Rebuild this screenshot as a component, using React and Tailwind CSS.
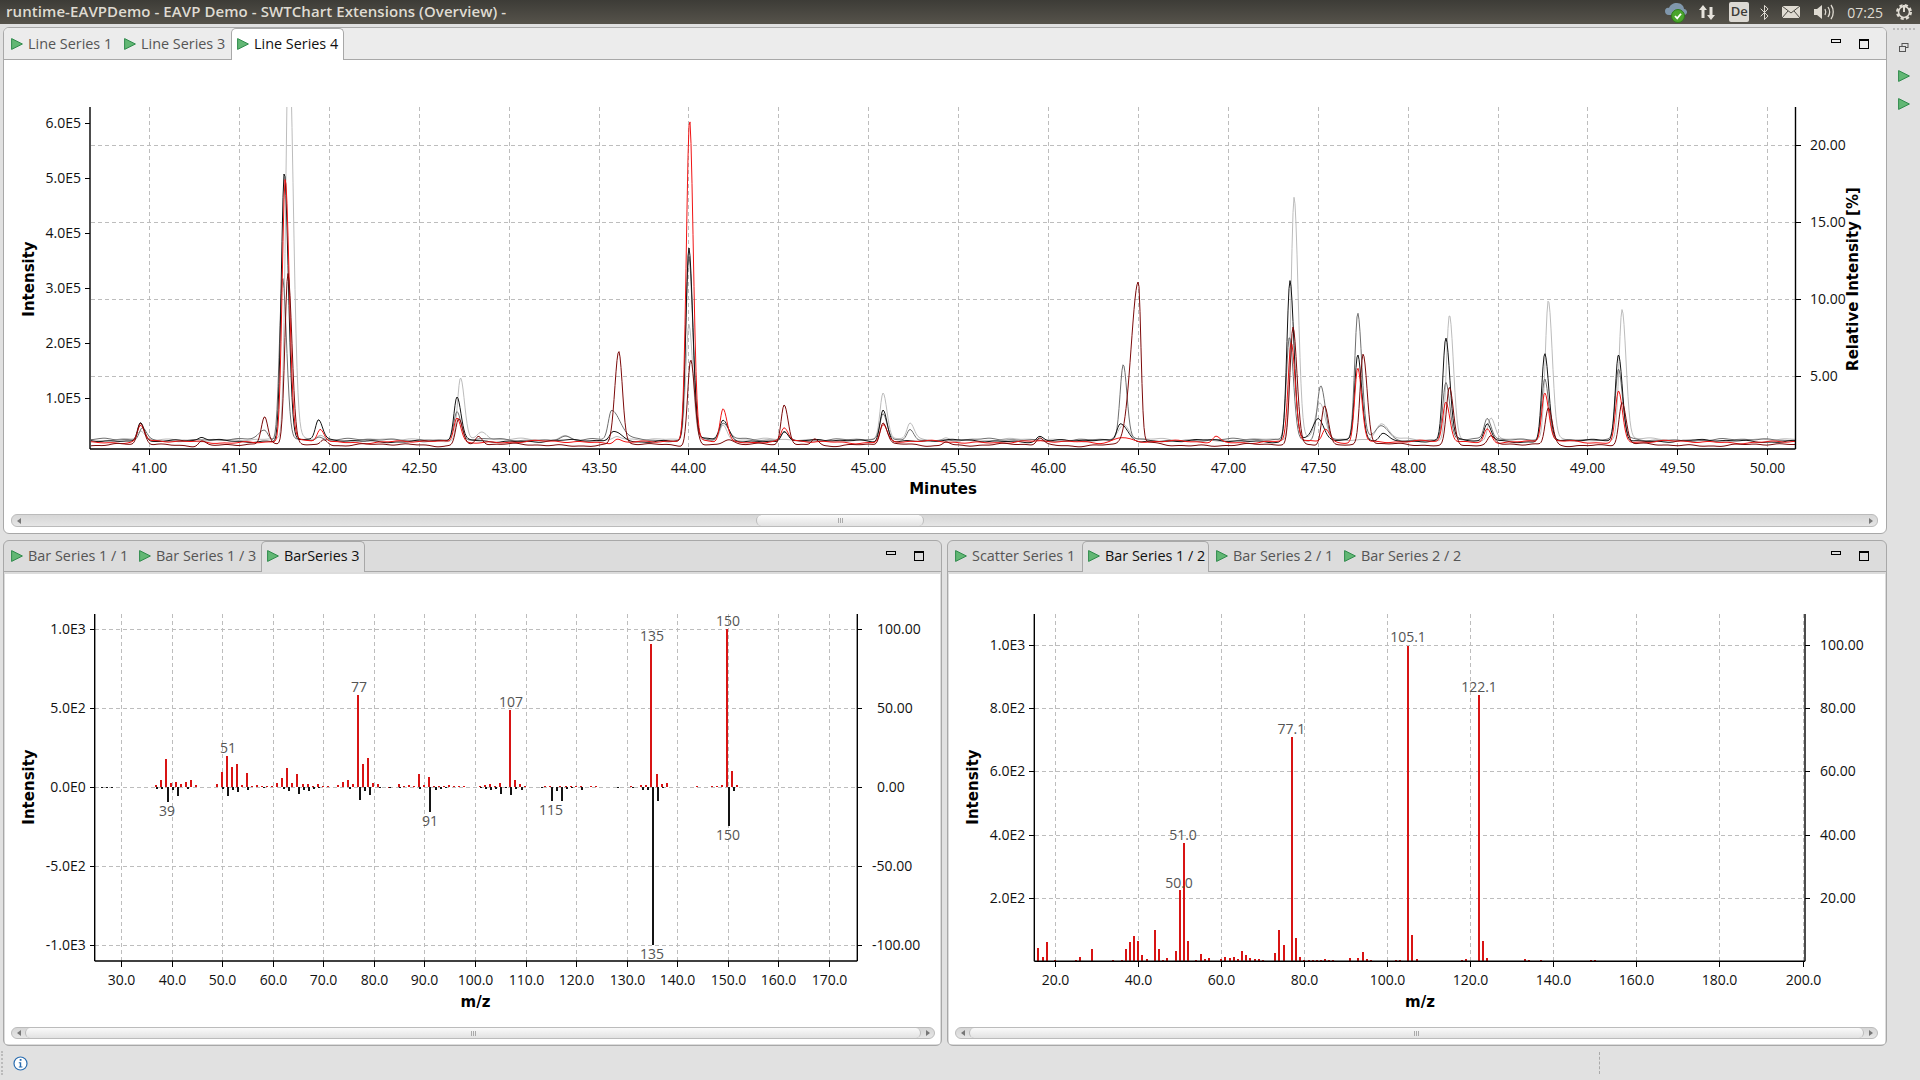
import React from "react";
import { Bluetooth } from "lucide-react";

const TICK_FONT = "font-['Open_Sans',sans-serif] text-[14px] fill-[#111]";
const TITLE_FONT = "font-['DejaVu_Sans',sans-serif] font-bold text-[15px] fill-black";
const LABEL_FONT = "font-['Open_Sans',sans-serif] text-[14px] fill-[#555]";
const GRID = "#bdbdbd";

// [m/z, height in thirds of a pixel] read off the reference
const LEFT_RED = [[37,7],[38,22],[39,85],[40,13],[41,16],[42,10],[43,15],[44,22],[45,7],[49,10],[50,46],[51,94],[52,61],[53,69],[54,7],[55,43],[56,4],[57,6],[58,3],[59,3],[60,4],[61,12],[62,28],[63,58],[64,12],[65,40],[66,9],[67,9],[68,3],[69,9],[70,4],[71,4],[73,7],[74,16],[75,22],[76,9],[77,277],[78,70],[79,88],[80,12],[81,9],[83,1],[85,9],[86,3],[87,6],[88,4],[89,40],[90,7],[91,30],[92,3],[93,3],[94,3],[95,6],[96,4],[97,4],[98,4],[101,3],[102,6],[103,9],[104,4],[105,12],[107,232],[108,22],[109,9],[110,4],[114,3],[115,3],[117,3],[118,3],[119,3],[120,3],[121,3],[123,3],[124,3],[131,3],[133,6],[134,6],[135,430],[136,40],[137,9],[138,12],[144,3],[147,3],[148,3],[149,6],[150,474],[151,49],[152,6]];
const LEFT_BLACK = [[26,3],[27,3],[28,3],[37,5],[38,6],[39,46],[40,10],[41,28],[43,7],[50,7],[51,28],[52,10],[53,16],[55,10],[58,4],[62,7],[63,13],[65,22],[66,10],[67,13],[68,7],[69,4],[75,6],[77,40],[78,13],[79,25],[81,4],[83,3],[85,3],[89,7],[91,76],[92,10],[93,7],[94,4],[101,3],[102,7],[103,10],[104,7],[105,22],[106,4],[107,25],[108,7],[109,10],[113,3],[115,43],[116,13],[117,43],[118,6],[119,3],[121,10],[128,4],[131,3],[133,10],[134,10],[135,474],[136,43],[137,4],[150,118],[151,12]];
const RIGHT_RED = [[16,40],[17,13],[18,58],[20,4],[25,4],[26,13],[29,37],[34,4],[36,4],[37,37],[38,58],[39,76],[40,61],[41,19],[42,7],[44,94],[45,37],[46,4],[47,10],[49,31],[50,212],[51,355],[52,61],[54,4],[55,22],[56,7],[57,10],[60,7],[61,13],[62,10],[63,13],[64,7],[65,31],[66,19],[67,10],[68,7],[69,7],[70,4],[73,25],[74,94],[75,49],[77,673],[78,70],[79,13],[80,4],[81,4],[82,4],[83,4],[84,4],[85,7],[86,4],[87,4],[91,10],[93,10],[94,28],[95,7],[96,4],[102,4],[103,4],[105,945],[106,79],[107,7],[118,4],[119,7],[122,799],[123,61],[124,10],[133,7],[134,4],[137,4],[149,4],[150,4]];

const LINE_SERIES = [
  {
    color: "#bcbcbc",
    base: 440,
    peaks: [[40.95,432],[41.775,30,0.017,0.024],[41.95,436],[42.73,377],[42.85,432,0.025,0.03],[43.31,436,0.03,0.03],[43.6,437],[44.0,323],[44.19,425],[45.08,393],[45.23,424],[45.43,437],[46.42,425,0.03,0.03],[47.366,198],[47.51,403,0.025,0.03],[47.85,424,0.03,0.04],[48.23,315],[48.46,418],[48.78,301],[49.19,309]],
  },
  {
    color: "#707070",
    base: 440,
    peaks: [[40.96,428],[41.64,430,0.03,0.02],[41.74,277],[41.94,436],[42.71,412],[43.31,435,0.03,0.03],[43.57,411,0.018,0.05],[44.0,256],[44.19,424,0.02,0.03],[44.53,432],[45.08,415],[45.23,428],[46.416,366,0.018,0.02],[47.34,336],[47.514,386,0.02,0.025],[47.72,313],[47.85,427,0.03,0.04],[48.21,381],[48.44,419],[48.76,378],[49.17,370]],
  },
  {
    color: "#141414",
    base: 441,
    peaks: [[40.95,421],[41.29,438],[41.75,172],[41.94,421],[42.71,398],[43.58,432,0.02,0.05],[44.0,248],[44.19,421,0.02,0.03],[44.53,430],[45.08,409],[45.95,436],[46.4,423,0.02,0.04],[47.343,280],[47.5,419,0.03,0.03],[47.72,355],[47.86,432,0.02,0.03],[48.21,339],[48.44,424],[48.76,354],[49.17,354]],
  },
  {
    color: "#f01414",
    base: 442,
    peaks: [[40.95,426],[41.755,180],[41.95,429],[42.71,417],[43.6,438],[44.004,121,0.018,0.02],[44.19,408],[44.53,429],[45.08,425],[46.4,437,0.04,0.05],[46.93,436],[47.35,343],[47.54,430],[47.72,367],[48.21,402],[48.44,428],[48.76,393],[49.17,391]],
  },
  {
    color: "#7c0a0a",
    base: 445,
    peaks: [[40.95,424],[41.29,440],[41.64,418,0.018,0.018],[41.77,273],[41.97,439],[42.72,418],[42.83,436],[43.61,352,0.022,0.02],[44.01,359],[44.22,439,0.03,0.03],[44.53,405],[44.7,438],[45.08,423],[45.43,441],[45.95,438],[46.5,283,0.04,0.014],[47.36,328],[47.535,404],[47.75,354],[48.23,387],[48.46,437],[48.78,408],[49.19,403]],
  },
];

const lineX = (t) => 329.3 + (t - 42) * 179.8;

const buildTrace = ({ base, peaks }, seed) => {
  const points = [];
  for (let x = 91; x <= 1795; x += 1) {
    const t = 42 + (x - 329.3) / 179.8;
    let y = base + 0.9 * Math.sin(t * 9 + seed) + 0.6 * Math.sin(t * 23 + seed * 2) + 0.4 * Math.sin(t * 51 + seed * 3);
    peaks.forEach(([pt, top, left = 0.017, right = 0.022]) => {
      const d = t - pt;
      const s = d < 0 ? left : right;
      const g = Math.exp((-d * d) / (2 * s * s));
      const tail = d > 0 ? Math.exp(-d / 0.05) : g;
      y -= (base - top) * (0.96 * g + 0.04 * tail);
    });
    points.push(`${x},${Math.min(y, 448).toFixed(1)}`);
  }
  return points.join(" ");
};

const Play = () => (
  <svg width="12" height="12" viewBox="0 0 12 12" className="shrink-0">
    <polygon points="0.6,0.6 11.4,6 0.6,11.4" fill="#62b774" stroke="#2f8a4c" />
  </svg>
);

const Tab = ({ label, active, width, dim }) => (
  <div
    className={
      active
        ? `flex items-center gap-[5px] pl-[5px] pb-[2px] -mb-px shrink-0 rounded-t-[5px] border border-b-0 border-[#a8a8a8] ${dim ? "bg-[#e0e0e0]" : "bg-white"} ${width}`
        : `flex items-center gap-[5px] pl-[7px] shrink-0 ${width}`
    }
  >
    <Play />
    <span className={`text-[14.4px] whitespace-nowrap ${active ? "text-[#111]" : "text-[#555]"}`}>{label}</span>
  </div>
);

const WindowButtons = ({ dim }) => (
  <div className={`ml-auto flex items-start gap-[18px] mr-[17px] ${dim ? "pt-[10px]" : "pt-[11px]"}`}>
    <div className="w-[10px] h-[4px] border border-black" />
    <div className="w-[10px] h-[10px] border border-black border-t-2" />
  </div>
);

const ScrollButton = ({ right }) => (
  <div className="w-[13px] flex items-center justify-center shrink-0">
    <div
      className={`w-0 h-0 border-y-[3px] border-y-transparent ${right ? "border-l-[4px] border-l-[#777]" : "border-r-[4px] border-r-[#777]"}`}
    />
  </div>
);

const Scrollbar = ({ className, thumb }) => (
  <div className={`flex rounded-[6px] border border-[#bbb] bg-gradient-to-b from-[#d6d6d6] to-[#e6e6e6] ${className}`}>
    <ScrollButton />
    <div className={`flex-1 flex min-w-0 ${thumb}`}>
      <div className="flex-1 flex items-center justify-center rounded-[6px] border-x border-[#bbb] bg-gradient-to-b from-[#fafafa] to-[#e2e2e2]">
        <div className="flex gap-[1px]">
          <div className="w-px h-[5px] bg-[#aaa]" />
          <div className="w-px h-[5px] bg-[#aaa]" />
          <div className="w-px h-[5px] bg-[#aaa]" />
        </div>
      </div>
    </div>
    <ScrollButton right />
  </div>
);

const HGrid = ({ ys, x1, x2 }) =>
  ys.map((y) => (
    <line key={y} x1={x1} x2={x2} y1={y + 0.5} y2={y + 0.5} stroke={GRID} strokeDasharray="4 3" shapeRendering="crispEdges" />
  ));

const VGrid = ({ xs, y1, y2 }) =>
  xs.map((x) => (
    <line key={x} x1={x + 0.5} x2={x + 0.5} y1={y1} y2={y2} stroke={GRID} strokeDasharray="4 3" shapeRendering="crispEdges" />
  ));

const Axes = ({ left, right, top, bottom }) => (
  <g stroke="#000" strokeWidth="1.4">
    <line x1={left} x2={left} y1={top} y2={bottom} />
    <line x1={right} x2={right} y1={top} y2={bottom} />
    <line x1={left} x2={right} y1={bottom} y2={bottom} />
  </g>
);

const LeftTicks = ({ items, axis }) =>
  items.map(([y, label]) => (
    <g key={label}>
      <line x1={axis - 5} x2={axis} y1={y + 0.5} y2={y + 0.5} stroke="#000" shapeRendering="crispEdges" />
      <text x={axis - 9} y={y + 5} textAnchor="end" className={TICK_FONT}>{label}</text>
    </g>
  ));

const RightTicks = ({ items, axis, textX }) =>
  items.map(([y, label]) => (
    <g key={label}>
      <line x1={axis} x2={axis + 5} y1={y + 0.5} y2={y + 0.5} stroke="#000" shapeRendering="crispEdges" />
      <text x={label.startsWith("-") ? textX - 5 : textX} y={y + 5} className={TICK_FONT}>{label}</text>
    </g>
  ));

const BottomTicks = ({ items, axis, labelY }) =>
  items.map(([x, label]) => (
    <g key={label}>
      <line x1={x + 0.5} x2={x + 0.5} y1={axis} y2={axis + 6} stroke="#000" shapeRendering="crispEdges" />
      <text x={x + 0.5} y={labelY} textAnchor="middle" className={TICK_FONT}>{label}</text>
    </g>
  ));

const Rotated = ({ x, y, children }) => (
  <text x={x} y={y} transform={`rotate(-90 ${x} ${y})`} textAnchor="middle" className={TITLE_FONT}>{children}</text>
);

const LineChart = () => {
  const xs = [];
  for (let t = 41; t <= 50; t += 0.5) xs.push(t);
  const traces = React.useMemo(() => LINE_SERIES.map((s, i) => ({ color: s.color, points: buildTrace(s, i * 1.7 + 0.4) })), []);
  return (
    <svg width="1882" height="450" viewBox="4 60 1882 450" className="block">
      <defs>
        <clipPath id="plot-top">
          <rect x="90" y="107" width="1706" height="342" />
        </clipPath>
      </defs>
      <VGrid xs={xs.map((t) => Math.floor(lineX(t)))} y1={107} y2={449} />
      <HGrid ys={[145, 222, 299, 376]} x1={91} x2={1795} />
      <g clipPath="url(#plot-top)" fill="none" strokeWidth="1">
        {traces.map((t) => (
          <polyline key={t.color} points={t.points} stroke={t.color} />
        ))}
      </g>
      <Axes left={90} right={1795.5} top={107} bottom={449} />
      <LeftTicks axis={90} items={[[123, "6.0E5"], [178, "5.0E5"], [233, "4.0E5"], [288, "3.0E5"], [343, "2.0E5"], [398, "1.0E5"]]} />
      <RightTicks axis={1795.5} textX={1810} items={[[145, "20.00"], [222, "15.00"], [299, "10.00"], [376, "5.00"]]} />
      <BottomTicks axis={449} labelY={473} items={xs.map((t) => [Math.floor(lineX(t)), t.toFixed(2)])} />
      <text x="943" y="494" textAnchor="middle" className={TITLE_FONT}>Minutes</text>
      <Rotated x={34} y={279}>Intensity</Rotated>
      <Rotated x={1858} y={279}>Relative Intensity [%]</Rotated>
    </svg>
  );
};

const Bars = ({ data, xOf, zero, color, dir, offset }) =>
  data.map(([m, h]) => (
    <rect
      key={m}
      x={Math.round(xOf(m) + offset)}
      y={dir < 0 ? zero - h / 3 : zero}
      width="2"
      height={Math.max(h / 3, 1)}
      fill={color}
      shapeRendering="crispEdges"
    />
  ));

const PeakLabel = ({ x, y, children }) => (
  <text x={x} y={y + 5} textAnchor="middle" className={LABEL_FONT}>{children}</text>
);

const MirrorChart = () => {
  const xOf = (m) => 121 + (m - 30) * 5.057;
  const ticks = [];
  for (let m = 30; m <= 170; m += 10) ticks.push([Math.round(xOf(m)), `${m}.0`]);
  const ys = [629, 708, 787, 866, 945];
  return (
    <svg width="935" height="453" viewBox="5 574 935 453" className="block">
      <VGrid xs={ticks.map((t) => t[0])} y1={614} y2={961} />
      <HGrid ys={ys} x1={95} x2={857} />
      <Bars data={LEFT_RED} xOf={xOf} zero={787} color="#d81414" dir={-1} offset={-1.5} />
      <Bars data={LEFT_BLACK} xOf={xOf} zero={787} color="#141414" dir={1} offset={0} />
      <Axes left={94.7} right={857.3} top={614} bottom={961} />
      <LeftTicks axis={94.7} items={[[629, "1.0E3"], [708, "5.0E2"], [787, "0.0E0"], [866, "-5.0E2"], [945, "-1.0E3"]]} />
      <RightTicks axis={857.3} textX={877} items={[[629, "100.00"], [708, "50.00"], [787, "0.00"], [866, "-50.00"], [945, "-100.00"]]} />
      <BottomTicks axis={961} labelY={985} items={ticks} />
      <text x="475.5" y="1007" textAnchor="middle" className={TITLE_FONT}>m/z</text>
      <Rotated x={34} y={787}>Intensity</Rotated>
      <PeakLabel x={167} y={811}>39</PeakLabel>
      <PeakLabel x={228} y={748}>51</PeakLabel>
      <PeakLabel x={359} y={687}>77</PeakLabel>
      <PeakLabel x={511} y={702}>107</PeakLabel>
      <PeakLabel x={430} y={821}>91</PeakLabel>
      <PeakLabel x={551} y={810}>115</PeakLabel>
      <PeakLabel x={652} y={636}>135</PeakLabel>
      <PeakLabel x={728} y={621}>150</PeakLabel>
      <PeakLabel x={652} y={954}>135</PeakLabel>
      <PeakLabel x={728} y={835}>150</PeakLabel>
    </svg>
  );
};

const BarChart = () => {
  const xOf = (m) => 1054.6 + (m - 20) * 4.155;
  const ticks = [];
  for (let m = 20; m <= 200; m += 20) ticks.push([Math.round(xOf(m)), `${m}.0`]);
  const ys = [645, 708, 771, 835, 898];
  return (
    <svg width="936" height="453" viewBox="949 574 936 453" className="block">
      <VGrid xs={ticks.map((t) => t[0])} y1={614} y2={961} />
      <HGrid ys={ys} x1={1035} x2={1805} />
      <Bars data={RIGHT_RED} xOf={xOf} zero={961} color="#d81414" dir={-1} offset={-0.5} />
      <Axes left={1034.3} right={1805} top={614} bottom={961.3} />
      <LeftTicks axis={1034.3} items={[[645, "1.0E3"], [708, "8.0E2"], [771, "6.0E2"], [835, "4.0E2"], [898, "2.0E2"]]} />
      <RightTicks axis={1805} textX={1820} items={[[645, "100.00"], [708, "80.00"], [771, "60.00"], [835, "40.00"], [898, "20.00"]]} />
      <BottomTicks axis={961} labelY={985} items={ticks} />
      <text x="1420" y="1007" textAnchor="middle" className={TITLE_FONT}>m/z</text>
      <Rotated x={978} y={787}>Intensity</Rotated>
      <PeakLabel x={1408} y={637}>105.1</PeakLabel>
      <PeakLabel x={1479} y={687}>122.1</PeakLabel>
      <PeakLabel x={1291.4} y={729}>77.1</PeakLabel>
      <PeakLabel x={1183} y={835}>51.0</PeakLabel>
      <PeakLabel x={1179} y={883}>50.0</PeakLabel>
    </svg>
  );
};

const TrayIcons = () => (
  <div className="flex items-center h-full">
    <svg width="24" height="24" viewBox="0 0 24 24">
      <path d="M5 15c-3 0-4-2-4-4s2-4 4-3c1-3 4-5 8-5s7 3 7 6c2 0 3 2 3 3s-1 3-3 3z" fill="#8097ac" />
      <circle cx="14" cy="16" r="6.5" fill="#4aa52d" stroke="#2f7a1c" />
      <path d="M11 16l2.2 2.4 3.8-4.6" fill="none" stroke="#fff" strokeWidth="1.8" />
    </svg>
    <svg width="20" height="20" viewBox="0 0 20 20" className="ml-[10px]">
      <path d="M5 3l4 5H6.500v8h-3V8H1zM13 18l-4-5h2.500V5h3v8H17z" fill="#e6e3dc" />
    </svg>
    <div className="ml-[11px] w-[20px] h-[20px] rounded-[2px] bg-[#dcd9d3] flex items-center justify-center font-['Open_Sans',sans-serif] font-semibold text-[13px] text-[#3c3b37]">De</div>
    <Bluetooth size={17} color="#dfdbd2" strokeWidth={1.4} className="ml-[7px]" />
    <svg width="18" height="12" viewBox="0 0 18 12" className="ml-[9px]">
      <rect width="18" height="12" fill="#dfdbd2" />
      <path d="M0 0l9 7 9-7M0 12l6-7M18 12l-6-7" fill="none" stroke="#4a4842" />
    </svg>
    <svg width="20" height="18" viewBox="0 0 20 18" className="ml-[14px]">
      <path d="M0 6h3l5-4v14l-5-4H0z" fill="#dfdbd2" />
      <path d="M11 6c1 2 1 4 0 6M14 4c2 3 2 7 0 10M17 2c3 4 3 10 0 14" fill="none" stroke="#dfdbd2" strokeWidth="1.3" />
    </svg>
    <span className="ml-[13px] font-['Open_Sans',sans-serif] text-[14px] text-[#dfdbd2]">07:25</span>
    <svg width="18" height="18" viewBox="0 0 18 18" className="ml-[12px]">
      <circle cx="9" cy="9" r="6.5" fill="none" stroke="#dfdbd2" strokeWidth="3" strokeDasharray="3 2.100" />
      <circle cx="9" cy="9" r="5.500" fill="none" stroke="#dfdbd2" strokeWidth="1.500" />
      <path d="M9 2v7" stroke="#dfdbd2" strokeWidth="2" />
    </svg>
  </div>
);

const Sidebar = () => (
  <div className="flex-1 flex flex-col items-center pt-[4px]">
    <div className="w-[22px] border-t-2 border-dotted border-[#bbb]" />
    <svg width="10" height="9" viewBox="0 0 10 9" className="mt-[13px]">
      <rect x="3" y="0.500" width="6" height="4" fill="none" stroke="#555" />
      <rect x="0.500" y="3.500" width="6" height="5" fill="#e1e1e1" stroke="#555" />
    </svg>
    <div className="mt-[18px] ml-px"><Play /></div>
    <div className="mt-[16px] ml-px"><Play /></div>
  </div>
);

const App = () => (
  <div className="w-[1920px] h-[1080px] flex flex-col overflow-hidden bg-[#e1e1e1] font-['Open_Sans',sans-serif]">
    <div className="h-[24px] shrink-0 flex items-center justify-between bg-gradient-to-b from-[#3d3c37] to-[#56534b]">
      <span className="ml-[6px] -mt-[2px] font-semibold text-[15px] tracking-[0.07px] text-[#dfdbd2] whitespace-nowrap">
        runtime-EAVPDemo - EAVP Demo - SWTChart Extensions (Overview) -
      </span>
      <div className="mr-[7px] h-full flex"><TrayIcons /></div>
    </div>

    <div className="h-[1022px] shrink-0 flex">
      <div className="w-[1887px] shrink-0 pl-[3px] pt-[3px] flex flex-col gap-[6px]">
        {/* top panel */}
        <div className="h-[507px] shrink-0 rounded-[6px] border border-[#a8a8a8] bg-white overflow-hidden">
          <div className="h-[32px] flex bg-[#ececec] border-b border-[#a8a8a8]">
            <Tab label="Line Series 1" width="w-[113px]" />
            <Tab label="Line Series 3" width="w-[114px]" />
            <Tab label="Line Series 4" active width="w-[113px]" />
            <WindowButtons />
          </div>
          <LineChart />
          <Scrollbar className="h-[13px] mt-[4px] ml-[7px] mr-[8px]" thumb="pl-[731px] pr-[940px]" />
        </div>

        {/* bottom panels */}
        <div className="h-[506px] shrink-0 flex gap-[5px]">
          <div className="w-[939px] rounded-[6px] border border-[#a8a8a8] bg-[#dcdcdc] overflow-hidden">
            <div className="h-[31px] flex border-b border-[#a8a8a8]">
              <Tab label="Bar Series 1 / 1" width="w-[128px]" />
              <Tab label="Bar Series 1 / 3" width="w-[129px]" />
              <Tab label="BarSeries 3" active dim width="w-[104px]" />
              <WindowButtons dim />
            </div>
            <div className="mt-[2px] mx-px h-[470px] bg-white">
              <MirrorChart />
              <Scrollbar className="h-[12px] ml-[6px] mr-[5px]" thumb="" />
            </div>
          </div>
          <div className="w-[940px] rounded-[6px] border border-[#a8a8a8] bg-[#dcdcdc] overflow-hidden">
            <div className="h-[31px] flex border-b border-[#a8a8a8]">
              <Tab label="Scatter Series 1" width="w-[134px]" />
              <Tab label="Bar Series 1 / 2" active dim width="w-[127px]" />
              <Tab label="Bar Series 2 / 1" width="w-[128px]" />
              <Tab label="Bar Series 2 / 2" width="w-[128px]" />
              <WindowButtons dim />
            </div>
            <div className="mt-[2px] mx-px h-[470px] bg-white">
              <BarChart />
              <Scrollbar className="h-[12px] ml-[6px] mr-[7px]" thumb="" />
            </div>
          </div>
        </div>
      </div>
      <Sidebar />
    </div>

    <div className="flex-1 flex items-center">
      <div className="ml-[1px] h-[24px] border-l-2 border-dotted border-[#bbb]" />
      <svg width="15" height="15" viewBox="0 0 15 15" className="ml-[10px]">
        <circle cx="7.500" cy="7.500" r="6.500" fill="#fff" stroke="#2a6db0" strokeWidth="1.2" />
        <rect x="6.700" y="3" width="1.800" height="1.800" fill="#2a6db0" />
        <path d="M5.800 6.200h2.400v4.300h1.200v1H5.800v-1h1V7.200h-1z" fill="#2a6db0" />
      </svg>
      <div className="ml-[1571px] h-[22px] border-l border-dashed border-[#aaa]" />
    </div>
  </div>
);

export default App;
